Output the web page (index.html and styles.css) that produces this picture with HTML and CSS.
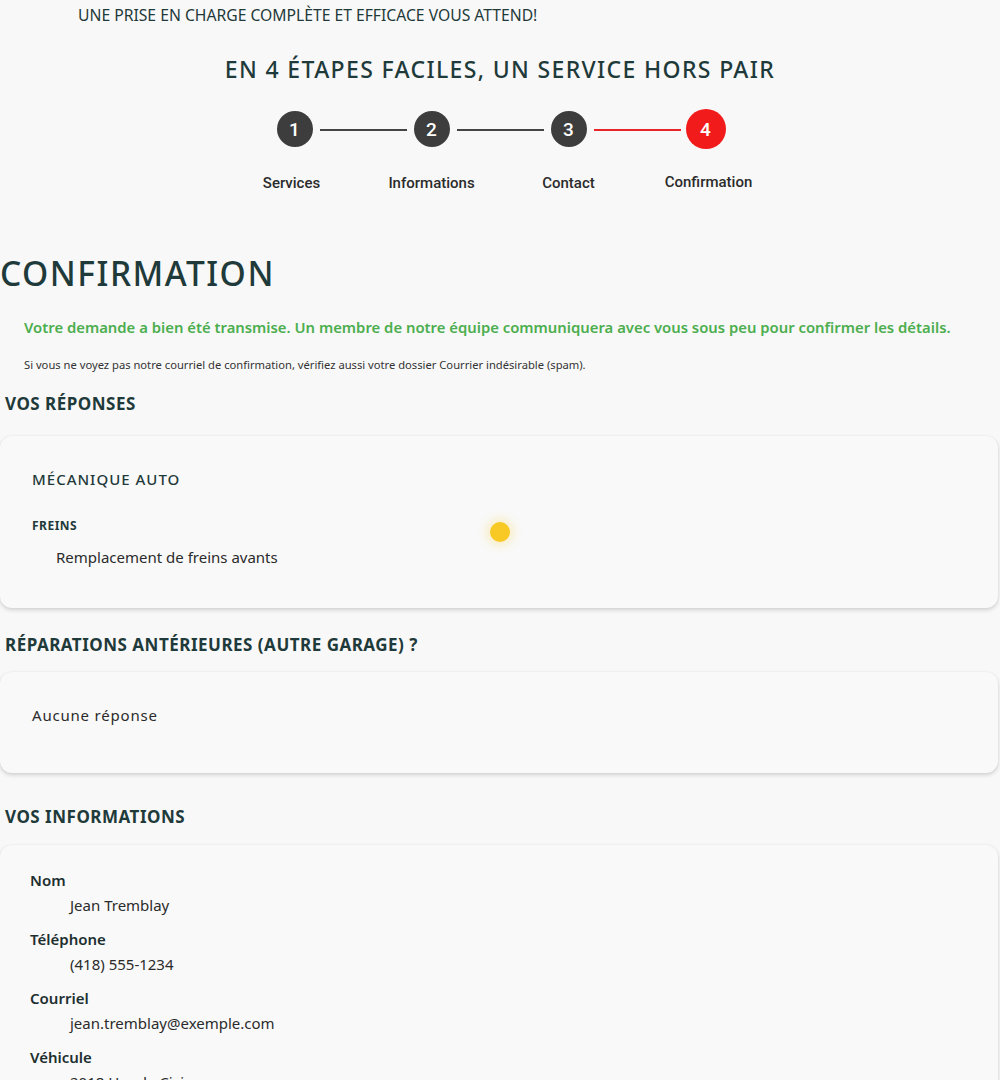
FILE: index.html
```html
<!DOCTYPE html>
<html lang="fr">

<head>
    <meta charset="UTF-8">
    <meta name="viewport" content="width=device-width, initial-scale=1.0">
    <title>Confirmation</title>
    <link rel="stylesheet" href="styles.css">
</head>

<body>
    <header class="intro">
        <p class="tagline">UNE PRISE EN CHARGE COMPLÈTE ET EFFICACE VOUS ATTEND!</p>
        <h2 class="steps-title">EN 4 ÉTAPES FACILES, UN SERVICE HORS PAIR</h2>

        <!-- étapes -->
        <div class="stepper">
            <div class="step first">
                <span class="step-num">1</span>
                <span class="step-label">Services</span>
            </div>
            <span class="step-line"></span>
            <div class="step">
                <span class="step-num">2</span>
                <span class="step-label">Informations</span>
            </div>
            <span class="step-line"></span>
            <div class="step">
                <span class="step-num">3</span>
                <span class="step-label">Contact</span>
            </div>
            <span class="step-line active"></span>
            <div class="step current">
                <span class="step-num">4</span>
                <span class="step-label">Confirmation</span>
            </div>
        </div>
    </header>

    <main class="confirm">
        <h1 class="confirm-title">CONFIRMATION</h1>
        <p class="success">Votre demande a bien été transmise. Un membre de notre équipe communiquera avec vous sous peu pour confirmer les détails.</p>
        <p class="note">Si vous ne voyez pas notre courriel de confirmation, vérifiez aussi votre dossier Courrier indésirable (spam).</p>

        <h3 class="section-title">VOS RÉPONSES</h3>
        <div class="card card-answers">
            <h4 class="service-title">MÉCANIQUE AUTO</h4>
            <h5 class="service-cat">FREINS</h5>
            <p class="service-item">Remplacement de freins avants</p>
            <span class="cursor-dot"></span>
        </div>

        <h3 class="section-title">RÉPARATIONS ANTÉRIEURES (AUTRE GARAGE) ?</h3>
        <div class="card card-small">
            <p class="empty">Aucune réponse</p>
        </div>

        <h3 class="section-title section-info">VOS INFORMATIONS</h3>
        <div class="card card-info">
            <dl class="info-list">
                <dt>Nom</dt>
                <dd>Jean Tremblay</dd>
                <dt>Téléphone</dt>
                <dd>(418) 555-1234</dd>
                <dt>Courriel</dt>
                <dd>jean.tremblay@exemple.com</dd>
                <dt>Véhicule</dt>
                <dd>2018 Honda Civic</dd>
            </dl>
        </div>
    </main>
</body>

</html>
```

FILE: styles.css
```css
body {
    margin: 0;
    padding: 0;
    background-color: #f8f8f8;
    color: #1e2f30;
    font-family: "Noto Sans", "Open Sans", sans-serif;
}

p,
h1,
h2,
h3,
h4,
h5 {
    margin: 0;
}

.intro {
    display: flex;
    flex-direction: column;
    align-items: center;
}

.tagline {
    align-self: flex-start;
    padding: 5px 0 0 78px;
    font-size: 15.7px;
    line-height: 20px;
    color: #1f3a3a;
}

.steps-title {
    margin-top: 28px;
    font-size: 23px;
    font-weight: 500;
    line-height: 32px;
    letter-spacing: 1.35px;
    color: #1f3a3a;
}

.stepper {
    display: flex;
    flex-flow: row nowrap;
    align-items: flex-start;
    margin-top: 24px;
}

.step {
    display: flex;
    flex-direction: column;
    align-items: center;
    width: 36px;
}

.step-num {
    display: flex;
    align-items: center;
    justify-content: center;
    width: 36px;
    height: 36px;
    margin-top: 2px;
    border-radius: 50%;
    background-color: #3d3d3d;
    color: #fff;
    font-family: Roboto, "Noto Sans", sans-serif;
    font-size: 19px;
    font-weight: 500;
}

.step.current .step-num {
    width: 40px;
    height: 40px;
    margin-top: 0;
    background-color: #f21b1b;
}

.step-label {
    margin-top: 27px;
    white-space: nowrap;
    font-family: Roboto, "Noto Sans", sans-serif;
    font-size: 15px;
    font-weight: 500;
    color: #2b2b2b;
}

.step.first .step-label {
    margin-right: 6px;
}

.step.current .step-label {
    margin: 24px 0 0 6px;
}

.step-line {
    width: 87px;
    height: 2px;
    margin: 20px 7px 0;
    background-color: #444;
}

.step-line.active {
    background-color: #e8262a;
}

.confirm {
    padding-bottom: 40px;
}

.confirm-title {
    margin-top: 58px;
    font-size: 33.5px;
    font-weight: 500;
    line-height: 46px;
    letter-spacing: 1.5px;
    color: #1f3a3a;
}

.success {
    margin: 20px 0 0 24px;
    font-size: 14.85px;
    font-weight: 600;
    line-height: 22px;
    color: #4cae4f;
}

.note {
    margin: 19px 0 0 24px;
    font-size: 11.2px;
    line-height: 16px;
    color: #333;
}

.section-title {
    padding-left: 5px;
    margin-top: 19px;
    font-size: 17px;
    font-weight: 700;
    line-height: 24px;
    letter-spacing: 0.5px;
    color: #1f3a3a;
}

.card {
    position: relative;
    margin: 20px 2px 25px 0;
    padding: 32px 32px 40px;
    border-radius: 12px;
    background-color: #f9f9f9;
    box-shadow: 0 2px 4px rgba(0, 0, 0, 0.16), 0 0 2px rgba(0, 0, 0, 0.05);
}

.card-answers {
    margin-top: 20px;
}

.service-title {
    font-size: 15px;
    font-weight: 500;
    line-height: 22px;
    letter-spacing: 1px;
    color: #1f3a3a;
}

.service-cat {
    margin-top: 28px;
    font-size: 12px;
    font-weight: 700;
    line-height: 16px;
    letter-spacing: 0.5px;
    color: #1f3a3a;
}

.service-item {
    margin: 12px 0 0 24px;
    font-size: 15px;
    line-height: 22px;
    color: #2b2b2b;
}

.cursor-dot {
    position: absolute;
    left: 490px;
    top: 86px;
    width: 20px;
    height: 20px;
    border-radius: 50%;
    background-color: #f8c825;
    box-shadow: 0 0 8px 4px rgba(250, 210, 60, 0.25);
}

.card-small {
    margin-top: 15px;
    padding: 32px 32px 47px;
}

.empty {
    font-size: 15px;
    line-height: 22px;
    letter-spacing: 0.8px;
    color: #2b2b2b;
}

.section-info {
    margin-top: 32px;
}

.card-info {
    margin-top: 16px;
    padding: 24px 30px 20px;
}

.info-list {
    margin: 0;
}

.info-list dt {
    font-size: 15px;
    font-weight: 600;
    line-height: 22px;
    color: #1e2f30;
}

.info-list dd {
    margin: 3px 0 12px 40px;
    font-size: 15px;
    line-height: 22px;
    color: #2b2b2b;
}
```
